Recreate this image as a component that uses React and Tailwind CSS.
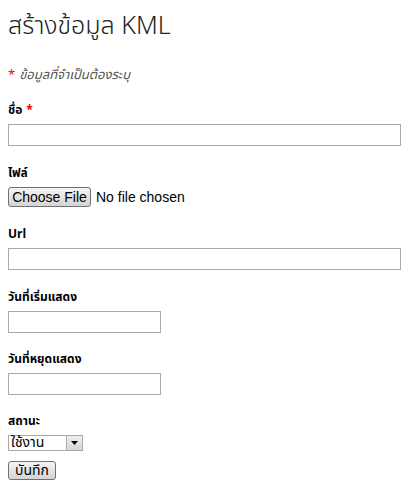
import React from 'react';

const font = { fontFamily: 'Tahoma, "Noto Sans Thai", "Liberation Sans", sans-serif' };

const Label = ({ children, required }) => (
    <div className="h-[18px] pt-[2px] leading-4 mb-[6px] text-[12px] font-bold text-black">
        {children}
        {required && <span className="text-[#e00] ml-1">*</span>}
    </div>
);

const TextInput = ({ wide }) => (
    <input
        type="text"
        className={
            wide
                ? 'block w-[393px] h-[22px] border border-[#a9a9a9] bg-white outline-none'
                : 'block w-[153px] h-[22px] border border-[#a9a9a9] bg-white outline-none'
        }
    />
);

const App = () => {
    return (
        <div className="min-h-screen bg-white text-black px-2 pt-[10px]" style={font}>
            {/* Title */}
            <h1 className="text-[25px] leading-[32px] font-light text-[#222]">สร้างข้อมูล KML</h1>

            <p className="mt-[25px] h-4 leading-4 text-[13px] italic text-[#555]">
                <span className="text-[#e00] not-italic mr-1">*</span>ข้อมูลที่จำเป็นต้องระบุ
            </p>

            <form className="mt-[17px]">
                <div className="mb-[17px]">
                    <Label required>ชื่อ</Label>
                    <TextInput wide />
                </div>

                <div className="mb-[17px]">
                    <Label>ไฟล์</Label>
                    <div className="flex items-center gap-[5px] h-5">
                        <button
                            type="button"
                            className="h-5 w-[83px] rounded-[3px] border border-[#707070] bg-gradient-to-b from-[#f4f4f4] to-[#d4d4d4] text-[14px] leading-[18px] text-black"
                            style={{ fontFamily: '"Liberation Sans", Arial, sans-serif' }}
                        >
                            Choose File
                        </button>
                        <span className="text-[14px]" style={{ fontFamily: '"Liberation Sans", Arial, sans-serif' }}>
                            No file chosen
                        </span>
                    </div>
                </div>

                <div className="mb-[17px]">
                    <Label>Url</Label>
                    <TextInput wide />
                </div>

                <div className="mb-[16px]">
                    <Label>วันที่เริ่มแสดง</Label>
                    <TextInput />
                </div>

                <div className="mb-[16px]">
                    <Label>วันที่หยุดแสดง</Label>
                    <TextInput />
                </div>

                <div className="mb-[10px]">
                    <Label>สถานะ</Label>
                    <div className="flex w-[75px] h-4 border border-[#a9a9a9] bg-white">
                        <span className="flex-1 text-[14px] leading-[14px] pl-[2px]">ใช้งาน</span>
                        <span className="w-4 h-full flex items-center justify-center border-l border-[#a9a9a9] bg-gradient-to-b from-[#f0f0f0] to-[#d6d6d6]">
                            <svg width="7" height="4" viewBox="0 0 7 4">
                                <path d="M0 0h7L3.5 4z" fill="#000" />
                            </svg>
                        </span>
                    </div>
                </div>

                <button
                    type="button"
                    className="block h-[19px] w-12 rounded-[3px] border border-[#707070] bg-gradient-to-b from-[#f4f4f4] to-[#d4d4d4] text-[14px] leading-[16px] text-black"
                >
                    บันทึก
                </button>
            </form>
        </div>
    );
};

export default App;
